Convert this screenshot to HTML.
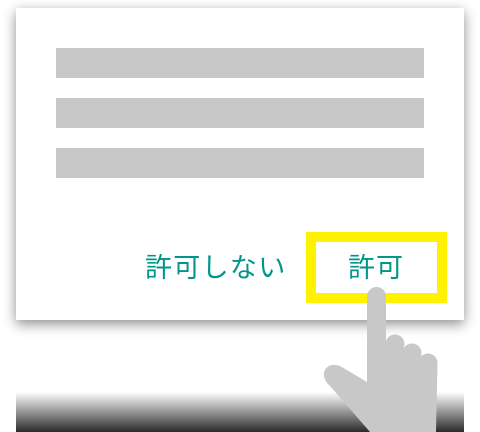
<!DOCTYPE html>
<html><head><meta charset="utf-8"><style>
body{margin:0;width:480px;height:432px;background:#fff;position:relative;overflow:hidden;font-family:"Liberation Sans","Noto Sans CJK JP",sans-serif}
.card{position:absolute;left:16px;top:8px;width:448px;height:312px;background:#fff;box-shadow:0 4px 12px rgba(0,0,0,.45)}
.bar{position:absolute;left:56px;width:368px;height:30px;background:#c8c8c8}
.t{position:absolute;color:#00968a;font-size:27px;line-height:1;white-space:nowrap}
.yb{position:absolute;left:306px;top:232px;width:121px;height:51px;border:10px solid #fff200}
.grad{position:absolute;left:16px;top:392px;width:448px;height:40px;background:linear-gradient(#fff,#2a2a2a)}
</style></head><body>
<div class="card"></div>
<div class="bar" style="top:48px"></div>
<div class="bar" style="top:98px"></div>
<div class="bar" style="top:148px"></div>
<div class="t" style="left:145px;top:255px;letter-spacing:1.3px">許可しない</div>
<div class="yb"></div>
<div class="t" style="left:348px;top:255px;letter-spacing:1px">許可</div>
<div class="grad"></div>
<svg style="position:absolute;left:0;top:0" width="480" height="432">
<g fill="#c8c8c8">
<rect x="367" y="287" width="19" height="110" rx="9.5"/>
<circle cx="395" cy="344" r="9.5"/>
<circle cx="412" cy="353" r="9.5"/>
<circle cx="428" cy="363" r="9.5"/>
<path d="M367 365 L367 382 L340 366 Q328 362 324 372 Q323 380 330 386 L370 432 L436 432 L437.5 363 L386 340 Z"/>
</g>
</svg>
</body></html>
